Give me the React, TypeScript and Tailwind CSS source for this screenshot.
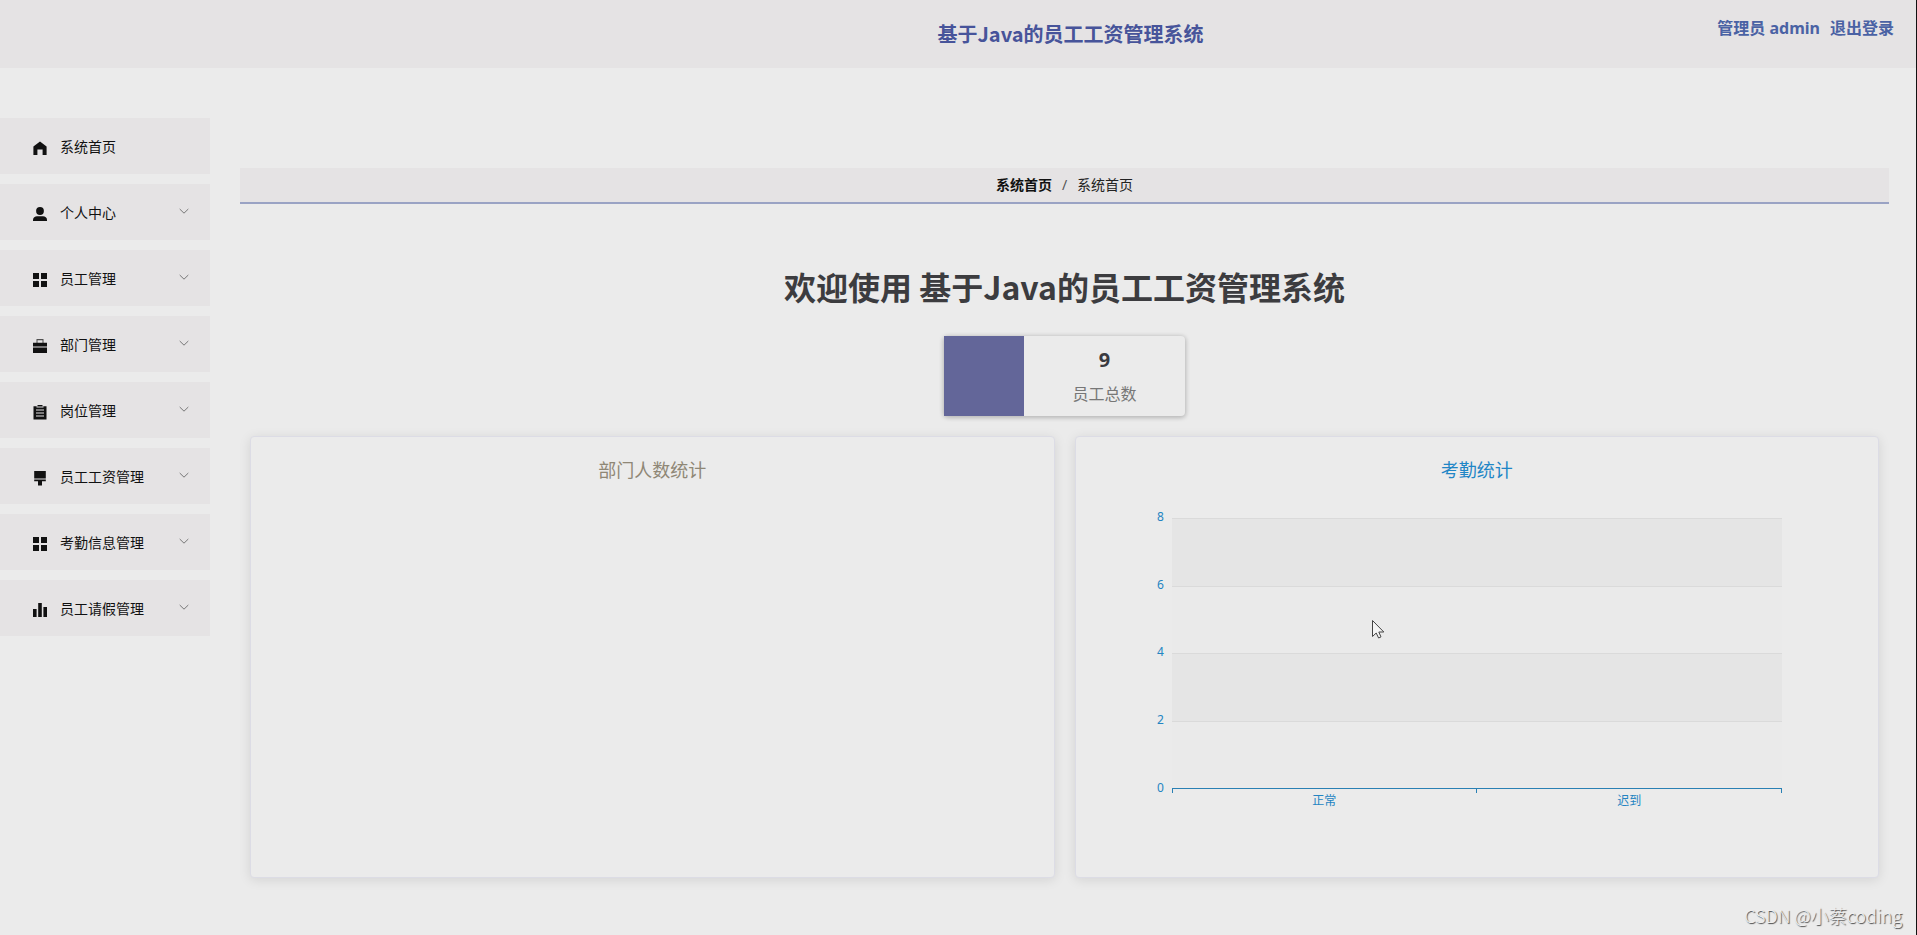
import React from "react";

type IconName = "home" | "user" | "grid" | "briefcase" | "clipboard" | "brush" | "bars";

const icons: Record<IconName, React.ReactNode> = {
  home: <path d="M7 0.5 13.6 5.6V14H9.6V8.6H4.4V14H0.4V5.6Z" />,
  user: (
    <>
      <circle cx="7" cy="4" r="3.9" />
      <path d="M0 14v-1.2C0 10.400 2 9.200 4 9.200h6c2 0 4 1.200 4 3.600V14Z" />
    </>
  ),
  grid: <path d="M0 0h6v6H0ZM8 0h6v6H8ZM0 8h6v6H0ZM8 8h6v6H8Z" />,
  briefcase: (
    <>
      <path d="M3.500 0h7v4h-1V1.200h-5V4h-1Z" fillOpacity="0.7" />
      <path d="M0 3.800h14v3.600H0ZM0 8.400h14V14H0Z" />
    </>
  ),
  clipboard: (
    <path
      fillRule="evenodd"
      d="M4.500 0h5v1.200H13.500V14.500H0.500V1.200H4.500ZM3 4.600v1h8v-1ZM3 7.600v1h8v-1ZM3 10.600v1h8v-1ZM3.500 1.600v.8h7v-.8Z"
    />
  ),
  brush: <path d="M1.200 0h11.600v7.400H1.200ZM1.200 8.600h11.600v1.600H9v4.300H5v-4.300H1.200Z" />,
  bars: <path d="M0 6h3.600v8H0ZM5.200 0h3.600v14H5.200ZM10.400 4H14v10h-3.600Z" />,
};

const menu: { label: string; icon: IconName; expandable: boolean }[] = [
  { label: "系统首页", icon: "home", expandable: false },
  { label: "个人中心", icon: "user", expandable: true },
  { label: "员工管理", icon: "grid", expandable: true },
  { label: "部门管理", icon: "briefcase", expandable: true },
  { label: "岗位管理", icon: "clipboard", expandable: true },
  { label: "员工工资管理", icon: "brush", expandable: true },
  { label: "考勤信息管理", icon: "grid", expandable: true },
  { label: "员工请假管理", icon: "bars", expandable: true },
];

const bands = [
  { top: 8, fill: "bg-[#e5e5e5]" },
  { top: 6, fill: "bg-[#eaeaea]" },
  { top: 4, fill: "bg-[#e5e5e5]" },
  { top: 2, fill: "bg-[#eaeaea]" },
];

function Header() {
  return (
    <header className="grid h-[68px] grid-cols-[1fr_auto_1fr] bg-[#e5e3e4] font-bold">
      <span />
      <h1 className="ml-[225px] self-center font-['Noto_Sans_CJK_SC',sans-serif] text-xl text-[#47549a]">
        基于Java的员工工资管理系统
      </h1>
      <div className="flex justify-end gap-2.5 pt-4 pr-[22px] text-base leading-6 text-[#4a62a4]">
        <span>管理员 admin</span>
        <a href="#logout">退出登录</a>
      </div>
    </header>
  );
}

function Sidebar() {
  return (
    <nav className="flex w-[210px] shrink-0 flex-col gap-2.5 pt-[50px]">
      {menu.map((item) => (
        <button
          key={item.label}
          type="button"
          className="flex h-14 items-center bg-[#e5e3e4] pt-0.5 pr-5 pl-[33px] text-left text-sm text-[#111]"
        >
          <svg viewBox="0 0 14 15" className="mt-0.5 mr-[13px] h-[15px] w-3.5 fill-[#111]">
            {icons[item.icon]}
          </svg>
          <span className="flex-1">{item.label}</span>
          {item.expandable && (
            <svg viewBox="0 0 12 12" className="mb-1 size-3 fill-none stroke-[#777]">
              <path d="M1.700 4 6 8.200 10.300 4" />
            </svg>
          )}
        </button>
      ))}
    </nav>
  );
}

function Panel({ title, tone, children }: { title: string; tone: string; children?: React.ReactNode }) {
  return (
    <section className="h-[442px] min-w-0 flex-1 rounded-sm border border-[#dcdce5] bg-[#ebebeb] pt-[21px] shadow-[0_2px_12px_0_rgba(0,0,0,0.1)]">
      <h3 className={`text-center text-lg leading-6 ${tone}`}>{title}</h3>
      {children}
    </section>
  );
}

function AttendanceChart() {
  return (
    <div className="px-[12%] pt-9 text-xs leading-4 text-[#2484c2]">
      <div className="relative flex h-[271px] flex-col border-b border-[#2a80b4]">
        {bands.map((band) => (
          <div key={band.top} className={`relative flex-1 border-t border-[#dadada] ${band.fill}`}>
            <span className="absolute -top-2.5 right-full mr-2">{band.top}</span>
          </div>
        ))}
        <span className="absolute -bottom-2 right-full mr-2">0</span>
      </div>
      <div className="flex">
        <div className="h-1 flex-1 border-l border-[#2a80b4]" />
        <div className="h-1 flex-1 border-x border-[#2a80b4]" />
      </div>
      <div className="flex text-center">
        <span className="flex-1">正常</span>
        <span className="flex-1">迟到</span>
      </div>
    </div>
  );
}

export default function App() {
  return (
    <div className="relative min-h-screen border-r border-[#111] bg-[#ebebeb] font-['Noto_Sans','Noto_Sans_CJK_SC',sans-serif]">
      <Header />
      <div className="flex">
        <Sidebar />
        <main className="min-w-0 flex-1 pt-[100px] pr-[27px] pl-[30px]">
          <nav className="flex h-9 items-center justify-center gap-2.5 border-b-2 border-[#9aa3c4] bg-[#e5e3e4] text-sm text-[#222]">
            <a href="#home" className="font-bold text-[#111]">系统首页</a>
            <span className="text-[#555]">/</span>
            <span>系统首页</span>
          </nav>
          <h2 className="mt-[58px] text-center font-['Noto_Sans_CJK_SC',sans-serif] text-[32px] leading-[48px] font-bold text-[#3c3c3f]">
            欢迎使用 基于Java的员工工资管理系统
          </h2>
          <div className="mx-auto mt-[26px] flex h-20 w-[241px] rounded-sm bg-[#ebebeb] shadow-[0_1px_4px_1px_rgba(0,0,0,0.22)]">
            <div className="w-20 bg-[#636699]" />
            <div className="flex flex-1 flex-col items-center justify-center gap-2">
              <strong className="text-xl leading-7 text-[#3a3a40]">9</strong>
              <span className="text-base leading-6 text-[#777]">员工总数</span>
            </div>
          </div>
          <div className="mt-5 flex gap-5 px-2.5">
            <Panel title="部门人数统计" tone="text-[#8f8776]" />
            <Panel title="考勤统计" tone="text-[#1f86c6]">
              <AttendanceChart />
            </Panel>
          </div>
        </main>
      </div>
      <svg
        viewBox="0 0 14 20"
        className="absolute top-[619px] left-[1371px] h-5 w-3.5 fill-[#f4f4f4] stroke-[#444]"
      >
        <path d="M1.500 1.500V17.500L5.200 14 7.600 19 10 17.900 7.800 13H12.800Z" />
      </svg>
      <div className="absolute right-3.5 bottom-1.5 font-['Noto_Sans_CJK_SC',sans-serif] text-lg leading-7 font-light text-[#f0f0f0] [text-shadow:1px_1px_1px_#444]">
        CSDN @小蔡coding
      </div>
    </div>
  );
}
